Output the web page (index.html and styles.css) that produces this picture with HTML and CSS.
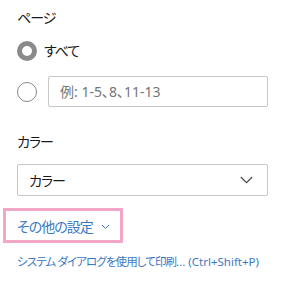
FILE: index.html
```html
<!DOCTYPE html>
<html lang="ja">
<head>
<meta charset="utf-8">
<link rel="stylesheet" href="styles.css">
</head>
<body>
<div class="panel">
  <div class="label label-pages">ページ</div>
  <div class="radio-row row-all">
    <span class="radio checked"></span>
    <span class="radio-text">すべて</span>
  </div>
  <div class="radio-row row-range">
    <span class="radio"></span>
    <div class="input">例: 1-5、8、11-13</div>
  </div>
  <div class="label label-color">カラー</div>
  <div class="select">
    <span class="select-text">カラー</span>
    <svg class="chev" width="13" height="8" viewBox="0 0 13 8"><path d="M0.8 1 L6.5 6.7 L12.2 1" fill="none" stroke="#444" stroke-width="1.1"/></svg>
  </div>
  <div class="more-wrap">
    <div class="more"><span class="more-text">その他の設定</span>
      <svg class="chev-small" width="9" height="6" viewBox="0 0 9 6"><path d="M1 1 L4.5 4.5 L8 1" fill="none" stroke="#3a78c4" stroke-width="1"/></svg>
    </div>
  </div>
  <div class="sys-link"><span class="jp">システム ダイアログを使用して印刷</span>... (Ctrl+Shift+P)</div>
</div>
</body>
</html>
```
FILE: styles.css
```css
html, body {
  margin: 0;
  padding: 0;
  background: #ffffff;
}
body {
  font-family: "Noto Sans", "Noto Sans CJK JP", sans-serif;
  font-feature-settings: "palt";
  color: #1a1a1a;
  width: 289px;
  height: 298px;
  overflow: hidden;
}
.panel {
  padding: 8px 21px 0 17px;
  display: flex;
  flex-direction: column;
}
.label {
  font-size: 14px;
  line-height: 20px;
  height: 20px;
  letter-spacing: -1px;
}
.radio-row {
  display: flex;
  align-items: center;
}
.row-all {
  margin-top: 13px;
  height: 20px;
}
.radio {
  box-sizing: border-box;
  width: 20px;
  height: 20px;
  border-radius: 50%;
  border: 1px solid #8a8a8a;
  flex: none;
}
.radio.checked {
  border: 5px solid #8a8a8a;
}
.radio-text {
  margin-left: 7px;
  font-size: 14px;
  line-height: 20px;
  letter-spacing: -1px;
}
.row-range {
  margin-top: 15px;
  height: 31px;
}
.input {
  box-sizing: border-box;
  margin-left: 11px;
  flex: 1;
  height: 31px;
  border: 1px solid #c6c6c6;
  border-radius: 2px;
  padding: 0 11px;
  font-size: 14px;
  line-height: 29px;
  color: #767676;
}
.label-color {
  margin-top: 25px;
}
.select {
  box-sizing: border-box;
  margin-top: 12px;
  height: 32px;
  border: 1px solid #c6c6c6;
  border-radius: 2px;
  display: flex;
  align-items: center;
  justify-content: space-between;
  padding: 0 14px 0 11px;
}
.select-text {
  font-size: 14px;
  color: #1a1a1a;
  letter-spacing: -1px;
}
.chev {
  display: block;
}
.more-wrap {
  margin-top: 12px;
  margin-left: -14px;
  align-self: flex-start;
  border: 3px solid #f2a7c9;
  width: 114px;
  height: 29px;
}
.more {
  display: flex;
  align-items: center;
  height: 29px;
  padding-left: 11px;
  font-size: 14px;
  color: #3a78c4;
  white-space: nowrap;
}
.more-text {
  letter-spacing: -1px;
}
.chev-small {
  margin-left: 8px;
  margin-top: 2px;
}
.sys-link {
  margin-top: 11px;
  font-size: 11.5px;
  line-height: 16px;
  color: #3a78c4;
  white-space: nowrap;
}
.sys-link .jp {
  letter-spacing: -0.9px;
}
```
